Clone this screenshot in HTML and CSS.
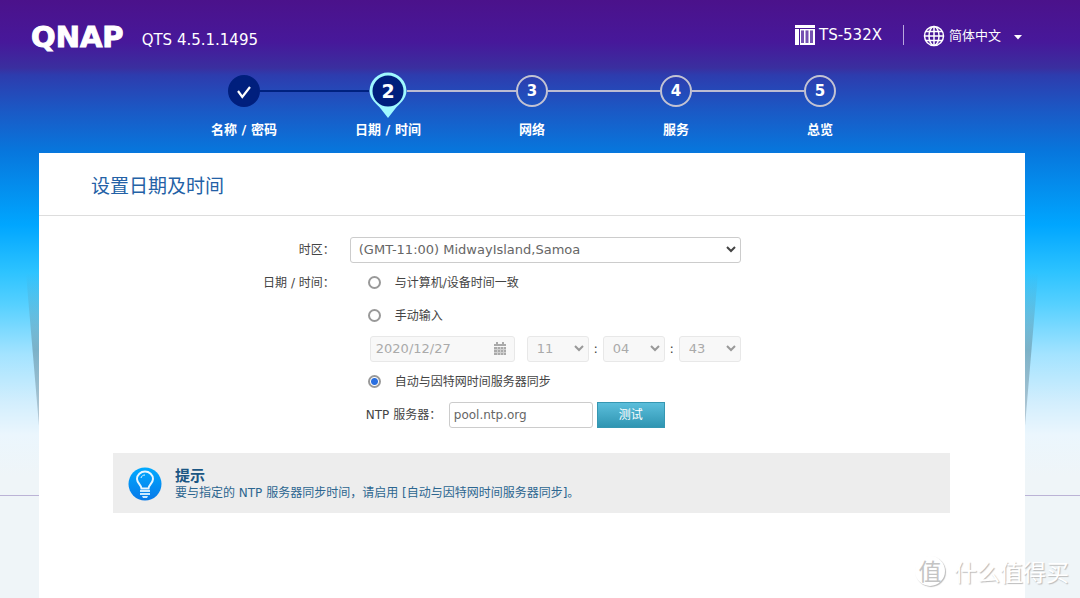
FILE: index.html
```html
<!DOCTYPE html>
<html lang="zh-CN">
<head>
<meta charset="utf-8">
<meta name="viewport" content="width=device-width, initial-scale=1">
<title>QNAP QTS</title>
<link rel="stylesheet" href="styles.css">
</head>
<body>
<header class="topbar">
  <span class="logo">QNAP</span>
  <span class="version">QTS 4.5.1.1495</span>
  <div class="device">
    <svg class="device-icon" width="20" height="20" viewBox="0 0 20 20" aria-hidden="true">
      <path fill="#fff" fill-rule="evenodd" d="M0 0H20V3H0ZM0 4H4V20H0ZM5 4H20V20H5ZM6 5.500V18H9V5.500ZM10.500 5.500V18H13.500V5.500ZM15 5.500V18H18V5.500Z"/>
      <path fill="#fff" fill-opacity=".25" d="M6 5.500H18V18H6Z"/>
    </svg>
    <span>TS-532X</span>
  </div>
  <button class="language" type="button">
    <svg width="22" height="22" viewBox="0 0 22 22" fill="none" stroke="#fff" stroke-width="1.500" aria-hidden="true">
      <circle cx="11" cy="11" r="9.500"/>
      <ellipse cx="11" cy="11" rx="5" ry="9.500"/>
      <path d="M11 1V21M1 11H21M2.500 6.500H19.500M2.500 15.500H19.500"/>
    </svg>
    <span>简体中文</span>
    <svg class="caret" width="8" height="5" viewBox="0 0 8 5" aria-hidden="true"><path fill="#fff" d="M0 0H8L4 4.500Z"/></svg>
  </button>
</header>

<ol class="steps">
  <li class="step">
    <div class="track">
      <span class="line line-none"></span>
      <span class="dot dot-done"><svg width="16" height="16" viewBox="0 0 16 16" fill="none" stroke="#fff" stroke-width="2.200" aria-label="完成"><path d="M2 8L6.300 14L14 4"/></svg></span>
      <span class="line line-done"></span>
    </div>
    <span class="step-label">名称 / 密码</span>
  </li>
  <li class="step" aria-current="step">
    <div class="track">
      <span class="line line-done"></span>
      <span class="pin">
        <svg width="38" height="46" viewBox="0 0 38 46" aria-hidden="true">
          <path fill="#9ff8ff" d="M19 .5A18.500 18.500 0 0 1 37.500 19C37.500 27 30 32 26 37L19 46L12 37C8 32 .5 27 .5 19A18.500 18.500 0 0 1 19 .5Z"/>
          <circle cx="19" cy="19" r="15.500" fill="#001f7d"/>
        </svg>
        <b class="pin-number">2</b>
      </span>
      <span class="line"></span>
    </div>
    <span class="step-label">日期 / 时间</span>
  </li>
  <li class="step">
    <div class="track"><span class="line"></span><span class="dot">3</span><span class="line"></span></div>
    <span class="step-label">网络</span>
  </li>
  <li class="step">
    <div class="track"><span class="line"></span><span class="dot">4</span><span class="line"></span></div>
    <span class="step-label">服务</span>
  </li>
  <li class="step">
    <div class="track"><span class="line"></span><span class="dot">5</span><span class="line line-none"></span></div>
    <span class="step-label">总览</span>
  </li>
</ol>

<main class="card">
  <h1 class="title">设置日期及时间</h1>
  <form class="form">
    <label class="label" for="zone">时区：</label>
    <div class="row">
      <select class="field zone" id="zone"><option>(GMT-11:00) MidwayIsland,Samoa</option></select>
    </div>
    <span class="label">日期 / 时间：</span>
    <div class="row indent">
      <label class="choice"><input class="radio" type="radio" name="source">与计算机/设备时间一致</label>
    </div>
    <div class="row indent">
      <label class="choice"><input class="radio" type="radio" name="source">手动输入</label>
    </div>
    <div class="row time-row">
      <input class="field date" type="text" value="2020/12/27" aria-label="日期" disabled>
      <select class="field time" aria-label="时" disabled><option>11</option></select>
      <span class="colon">:</span>
      <select class="field time" aria-label="分" disabled><option>04</option></select>
      <span class="colon">:</span>
      <select class="field time" aria-label="秒" disabled><option>43</option></select>
    </div>
    <div class="row indent">
      <label class="choice"><input class="radio" type="radio" name="source" checked>自动与因特网时间服务器同步</label>
    </div>
    <div class="row ntp-row">
      <label class="ntp-label" for="ntp">NTP 服务器：</label>
      <input class="field ntp" id="ntp" type="text" value="pool.ntp.org">
      <button class="test" type="button">测试</button>
    </div>
  </form>
  <section class="tip">
    <svg width="34" height="34" viewBox="0 0 34 34" aria-hidden="true">
      <defs><linearGradient id="bulb" x2="0" y2="1"><stop stop-color="#0af"/><stop offset="1" stop-color="#0879e8"/></linearGradient></defs>
      <circle cx="17" cy="17" r="16.500" fill="url(#bulb)"/>
      <path fill="none" stroke="#e8f6ff" stroke-width="2" d="M13.500 21.500C13.500 18 9 16 9 12A8 7.500 0 0 1 25 12C25 16 20.500 18 20.500 21.500Z"/>
      <path fill="none" stroke="#e8f6ff" stroke-width="1" d="M13 11C13.500 9 15 8 17 8"/>
      <path fill="#cdeaff" d="M12 23H22V25H12ZM12 26H22V28H12ZM14 29H20L19 31H15Z"/>
    </svg>
    <div>
      <h2 class="tip-title">提示</h2>
      <p class="tip-text">要与指定的 NTP 服务器同步时间，请启用 [自动与因特网时间服务器同步]。</p>
    </div>
  </section>
</main>

<div class="watermark"><span class="seal">值</span><span>什么值得买</span></div>
</body>
</html>
```
FILE: styles.css
```css
* { box-sizing: border-box; }

body {
  margin: 0;
  min-height: 100vh;
  display: flex;
  flex-direction: column;
  color: #444;
  font: 12px/20px "DejaVu Sans", "Noto Sans CJK SC", sans-serif;
  background:
    linear-gradient(#bbb3d6, #bbb3d6) 0 495px / 100% 1px no-repeat,
    linear-gradient(#4b128b 0, #47189a 42px, #3a2f9f 68px, #2d3cae 75px, #1a5ac6 112px, #0777dd 152px, #00a6ff 225px, #2dc3ff 272px, #55d0ff 304px, #a3e3ff 354px, #d2eefd 402px, #ebf6fd 435px, #eff5f8 475px);
}

input, select, button { font: inherit; margin: 0; }

.topbar {
  display: flex;
  align-items: center;
  height: 70px;
  padding: 4px 58px 0 31px;
  color: #fff;
}
.logo {
  font-size: 29px;
  font-weight: 700;
  line-height: 28px;
  -webkit-text-stroke: 1px #fff;
}
.version { margin: 5px auto 0 18px; font-size: 15px; }
.device {
  display: flex;
  align-items: center;
  gap: 4px;
  padding-right: 21px;
  border-right: 1px solid #b9a8dd;
  margin-bottom: 4px;
  line-height: 18px;
  font-size: 15px;
}
.language {
  display: flex;
  align-items: center;
  gap: 4px;
  margin-bottom: 2px;
  padding: 0 0 0 19px;
  border: 0;
  background: none;
  color: #fff;
  font-size: 13px;
}
.caret { margin: 2px 0 0 9px; }

.steps {
  display: flex;
  justify-content: center;
  margin: 0 55px 0 39px;
  padding: 0 0 13px;
  list-style: none;
  color: #fff;
  font-size: 13px;
  font-weight: 700;
}
.step { width: 144px; text-align: center; }
.track { display: flex; align-items: center; height: 42px; margin-bottom: 8px; }
.line { flex: 1; height: 2px; background: #bcbcd2; }
.line-done { background: #00217f; }
.line-none { background: none; }
.dot {
  display: flex;
  align-items: center;
  justify-content: center;
  width: 32px;
  height: 32px;
  border: 2px solid #c3c3d3;
  border-radius: 50%;
  font-size: 15px;
}
.dot-done { border-color: #001f7d; background: #001f7d; }
.pin { position: relative; height: 38px; width: 38px; }
.pin svg { display: block; }
.pin-number { position: absolute; inset: 0; font-size: 19px; line-height: 38px; }

.card {
  position: relative;
  flex: 1;
  margin: 0 55px 0 39px;
  background: #fff;
}
.card::before, .card::after {
  content: "";
  position: absolute;
  top: 120px;
  width: 13px;
  height: 153px;
  background: linear-gradient(rgba(90, 130, 145, 0), rgba(90, 130, 145, .5) 50%, rgba(120, 140, 155, .4));
}
.card::before { right: 100%; clip-path: polygon(0 0, 100% 0, 100% 100%); }
.card::after { left: 100%; clip-path: polygon(0 0, 100% 0, 0 100%); }

.title {
  margin: 0;
  padding: 20px 52px 16px;
  border-bottom: 1px solid #ddd;
  color: #2361a6;
  font-size: 19px;
  font-weight: 400;
  line-height: 26px;
}

.form {
  display: grid;
  grid-template-columns: 30% 391px;
  column-gap: 15px;
  grid-auto-rows: 33px;
  padding-top: 17px;
}
.label { align-self: center; text-align: right; }
.row { grid-column: 2; display: flex; align-items: center; }
.indent { padding-left: 18px; }
.choice { display: flex; align-items: center; gap: 14px; }

.field {
  height: 26px;
  border: 1px solid #ccc;
  border-radius: 3px;
  background-color: #fff;
  color: #666;
  font-size: 13px;
}
.field:disabled { border-color: #e8e8e8; background-color: #f8f8f8; color: #aaa; opacity: 1; }
select.field {
  appearance: none;
  background-image: url("data:image/svg+xml,%3Csvg xmlns='http://www.w3.org/2000/svg' width='10' height='7' fill='none' stroke='%23444' stroke-width='2'%3E%3Cpath d='M1 1L5 5L9 1'/%3E%3C/svg%3E");
  background-repeat: no-repeat;
  background-position: right 4px center;
}
select.field:disabled {
  background-image: url("data:image/svg+xml,%3Csvg xmlns='http://www.w3.org/2000/svg' width='10' height='7' fill='none' stroke='%23999' stroke-width='2'%3E%3Cpath d='M1 1L5 5L9 1'/%3E%3C/svg%3E");
}
.zone { width: 100%; padding: 0 8px; }
.time-row { padding-left: 20px; }
.field.date {
  width: 145px;
  margin-right: 12px;
  padding: 0 5px;
  background-image: url("data:image/svg+xml,%3Csvg xmlns='http://www.w3.org/2000/svg' width='12' height='13'%3E%3Cpath fill='%23aaa' d='M0 2H2V0H4V2H8V0H10V2H12V4H0ZM0 5H12V13H0Z'/%3E%3Cpath stroke='%23d0d0d0' d='M0 7.5H12M0 10.500H12M3.500 5V13M6.500 5V13M9.500 5V13'/%3E%3C/svg%3E");
  background-repeat: no-repeat;
  background-position: right 8px center;
}
.time { flex: 1; padding: 0 9px; }
.colon { width: 14px; text-align: center; font-size: 13px; }

.radio {
  appearance: none;
  width: 13px;
  height: 13px;
  border: 2px solid #999;
  border-radius: 50%;
  background: #fff;
}
.radio:checked { background: radial-gradient(circle, #2a6fe0 3px, #fff 4px); }

.ntp-row { padding-left: 16px; }
.ntp-label { flex: 1; white-space: nowrap; }
.ntp { width: 144px; margin-right: 4px; padding: 0 4px; font-size: 12px; }
.test {
  width: 68px;
  height: 26px;
  margin-right: 76px;
  padding: 0;
  border: 1px solid #3597b2;
  background: linear-gradient(#5bbedb, #2f95b2);
  color: #fff;
}

.tip {
  display: flex;
  align-items: center;
  gap: 13px;
  margin: 22px 75px 0 74px;
  padding: 14px 15px 12px;
  background: #ededed;
  color: #2c6690;
}
.tip-title { margin: 0; color: #1b5683; font-size: 15px; line-height: 18px; }
.tip-text { margin: 0; line-height: 16px; }

/* Site mark floating over the page corner */
.watermark {
  position: absolute;
  right: 11px;
  bottom: 11px;
  display: flex;
  align-items: center;
  gap: 9px;
  color: #fff;
  font: 23px/32px "Noto Sans CJK SC", sans-serif;
  text-shadow: 1px 1px 1px #bbb;
}
.seal {
  width: 30px;
  height: 30px;
  border-radius: 50%;
  box-shadow: 1px 1px 1px #bbb;
  color: #c4c4c4;
  line-height: 29px;
  text-align: center;
  text-shadow: none;
}
```
